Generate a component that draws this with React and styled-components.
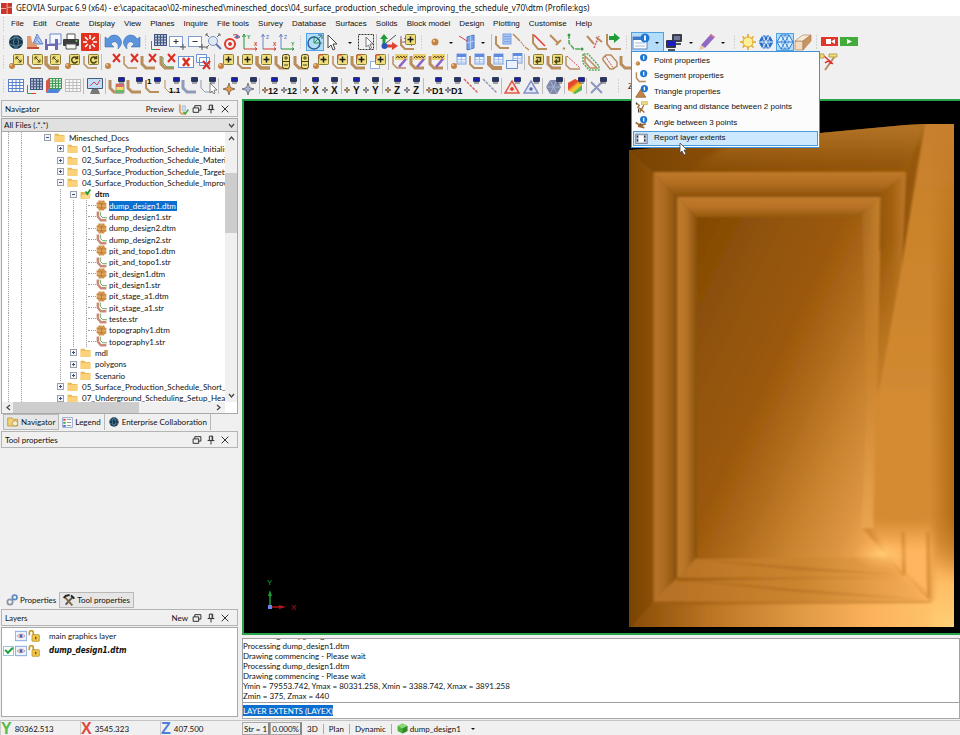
import React, { useState } from "react";
import styled, { createGlobalStyle, css } from "styled-components";

const ui = `Lato, "Noto Sans", sans-serif`;
const arial = `"Liberation Sans", Arial, sans-serif`;

const Global = createGlobalStyle`
  * { box-sizing: border-box; }
  body { margin: 0; background: #f0f0f0; }
  button, input, select { font: inherit; color: inherit; margin: 0; padding: 0; border: 0; background: none; border-radius: 0; }
  svg { display: block; }
`;

const Page = styled.div`
  min-height: 100vh;
  display: flex;
  flex-direction: column;
  background: #f0f0f0;
  color: #111;
  font: 8px/10px ${ui};
`;

const TitleBar = styled.header`
  height: 16px;
  display: flex;
  align-items: center;
  gap: 4px;
  padding-left: 1px;
  background: #fff;
  white-space: nowrap;
  h1 {
    margin: 0;
    font: 8px/12px "Noto Sans", "Open Sans", sans-serif;
  }
`;

const MenuBar = styled.nav`
  height: 16px;
  display: flex;
  align-items: center;
  font: 8px/10px ${arial};
  white-space: nowrap;
`;

const MenuButton = styled.button`
  height: 16px;
  padding: 0 5px 0 4px;
`;

const ToolRow = styled.div`
  height: ${(p) => (p.$tall ? 27 : 20)}px;
  display: flex;
  align-items: center;
`;

const Grip = styled.span`
  flex: none;
  width: ${(p) => (p.$first ? 7 : 9)}px;
  height: 14px;
  background: radial-gradient(circle, #b5b5b5 1px, transparent 1px) center / 3px 3px repeat-y;
`;

const Sep = styled.span`
  flex: none;
  width: 1px;
  height: 16px;
  margin: 0 2px 0 1px;
  background: #bdbdbd;
`;

const Group = styled.div`
  flex: none;
  width: ${(p) => p.$w}px;
  display: grid;
  grid-auto-flow: column;
  grid-auto-columns: 1fr;
  justify-items: center;
`;

const Tool = styled.button`
  width: 18px;
  height: 18px;
  ${(p) =>
    p.$active &&
    css`
      background: #b4dcfb;
      box-shadow: inset 0 0 0 1px #4da3e6;
    `}
`;

const Arrow = styled.button`
  flex: none;
  width: 14px;
  height: 18px;
  display: grid;
  place-items: center;
  &::after {
    content: "";
    border: 2px solid transparent;
    border-top-color: #111;
    margin-top: 3px;
  }
`;

const Spacer = styled.span`
  flex: none;
  width: ${(p) => p.$w}px;
`;

const Dropdown = styled.div`
  flex: none;
  position: relative;
  display: flex;
  width: 33px;
  height: 20px;
  align-items: center;
  background: #b4dcfb;
  border: 1px solid #4da3e6;
`;

const Popup = styled.div`
  position: absolute;
  z-index: 5;
  top: 18px;
  left: -1px;
  width: 189px;
  height: 97px;
  padding: 1px;
  display: grid;
  grid-auto-rows: 1fr;
  background: #fcfcfc;
  border: 1px solid #3c93dc;
  font: 8px/10px ${arial};
`;

const PopupItem = styled.button`
  position: relative;
  display: flex;
  align-items: center;
  gap: 6px;
  padding-left: 1px;
  text-align: left;
  white-space: nowrap;
  border: 1px solid transparent;
  ${(p) =>
    p.$active &&
    css`
      background: #cce8ff;
      border-color: #4c9bd8;
    `}
`;

const Pointer = styled.svg`
  position: absolute;
  left: 45px;
  top: 10px;
`;

const Main = styled.main`
  flex: 1;
  display: flex;
  gap: 4px;
`;

const Side = styled.aside`
  flex: 0 0 25%;
  min-width: 0;
  display: flex;
  flex-direction: column;
  padding: 0 2px 3px 1px;
`;

const Work = styled.section`
  flex: 1;
  min-width: 0;
  display: flex;
  flex-direction: column;
  margin-left: -2px;
`;

const PanelHead = styled.div`
  flex: none;
  height: 17px;
  margin: 1px 0;
  padding: 0 7px 0 3px;
  display: flex;
  align-items: center;
  gap: 4px;
  border: 1px solid #b4b4b4;
  h2 {
    margin: 0;
    flex: 1;
    font: inherit;
  }
`;

const HeadIcon = styled.button`
  width: 10px;
  height: 10px;
`;

const Filter = styled.select`
  flex: none;
  height: 14px;
  padding: 0 2px;
  appearance: none;
  border: 1px solid #a8a8a8;
  background: #e1e1e1;
`;

const FilterBox = styled.label`
  flex: none;
  display: grid;
  align-items: center;
  & > * {
    grid-area: 1 / 1;
  }
  svg {
    justify-self: end;
    margin-right: 3px;
    pointer-events: none;
  }
`;

const TreeBox = styled.div`
  flex: none;
  border: 1px solid #a8a8a8;
  border-top: 0;
  background: #fff;
  display: grid;
  grid-template: 270px 11px / minmax(0, 1fr) 12px;
`;

const Tree = styled.div`
  height: 272px;
  display: grid;
  grid-template-rows: repeat(24, 1fr);
`;

const TreeRow = styled.div`
  display: flex;
  align-items: stretch;
  white-space: nowrap;
  & > svg,
  & > span {
    align-self: center;
  }
`;

const Guide = styled.i`
  flex: none;
  width: 13px;
  display: grid;
  place-items: center;
  background: ${(p) =>
    p.$line ? "repeating-linear-gradient(#a9a9a9 0 1px, #eee 1px 2px) center / 1px 100% no-repeat" : "none"};
`;

const Dash = styled.i`
  flex: none;
  align-self: center;
  width: 8px;
  margin-left: -5px;
  border-top: 1px dotted #999;
`;

const Toggle = styled.button`
  width: 7px;
  height: 7px;
  border: 1px solid #9a9fa8;
  background: linear-gradient(#35508c, #35508c) center / 3px 1px no-repeat,
    linear-gradient(#35508c, #35508c) center / 1px ${(p) => (p.$open ? 0 : 3)}px no-repeat, #f6f6f6;
`;

const NodeText = styled.span`
  margin-left: ${(p) => (p.$file ? 2 : 4)}px;
  padding-right: 1px;
  font-weight: ${(p) => (p.$bold ? 700 : 400)};
  color: ${(p) => (p.$selected ? "#fff" : "#111")};
  background: ${(p) => (p.$selected ? "#0a6fd0" : "none")};
`;

const ScrollBar = styled.div`
  display: flex;
  flex-direction: ${(p) => (p.$vertical ? "column" : "row")};
  align-items: center;
  justify-content: space-between;
  padding: ${(p) => (p.$vertical ? "3px 0" : "0 3px")};
  background: #f0f0f0;
  position: relative;
`;

const Track = styled.div`
  flex: 1;
  align-self: stretch;
  display: grid;
  margin: ${(p) => (p.$vertical ? "0" : "0 1px")};
  grid-template: ${(p) => (p.$vertical ? "31fr 61fr 160fr / 1fr" : "1fr / 127fr 75fr")};
  &::before {
    content: "";
    grid-area: ${(p) => (p.$vertical ? "2 / 1" : "1 / 1")};
    background: #cdcdcd;
  }
`;

const Tabs = styled.div`
  flex: none;
  height: 16px;
  padding-left: 2px;
  display: flex;
`;

const Tab = styled.button`
  display: flex;
  align-items: center;
  gap: 2px;
  padding: 0 3px;
  white-space: nowrap;
  border-right: 1px solid #b8b8b8;
  ${(p) =>
    p.$active &&
    css`
      background: #e6e6e6;
      border: 1px solid #b8b8b8;
    `}
  ${(p) => p.$plain && "border: 0;"}
`;

const Blank = styled.div`
  flex: 1;
`;

const LayerList = styled.div`
  flex: none;
  height: 90px;
  background: #fff;
  border: 1px solid #a8a8a8;
`;

const LayerRow = styled.label`
  height: 15px;
  display: flex;
  align-items: center;
  gap: 1px;
  span {
    margin-left: 8px;
    ${(p) => p.$current && "font-weight: 700; font-style: italic; font-family: 'DejaVu Sans Condensed', sans-serif;"}
  }
`;

const Check = styled.input.attrs({ type: "checkbox" })`
  appearance: none;
  width: 11px;
  height: 10px;
  margin-left: 1px;
  border: 1px solid ${(p) => (p.checked ? "#9cc0df" : "transparent")};
  background: #fff;
  display: grid;
  place-items: center;
  &:checked::after {
    content: "";
    width: 6px;
    height: 3px;
    border: solid #1e9e3a;
    border-width: 0 0 2px 2px;
    transform: rotate(-45deg);
    margin-top: -2px;
  }
`;

const View = styled.div`
  flex: 1;
  min-height: 300px;
  display: flex;
  background: #000;
  border: 2px solid #27a34a;
  border-right: 0;
  svg {
    flex: 1;
    width: 100%;
    height: 100%;
  }
`;

const Console = styled.div`
  flex: none;
  height: 65px;
  margin-top: 3px;
  padding-bottom: 1px;
  display: flex;
  flex-direction: column;
  justify-content: flex-end;
  overflow: hidden;
  background: #fff;
  border: 1px solid #a0a0a0;
  p {
    flex: none;
    margin: 0;
    white-space: nowrap;
  }
`;

const CommandLine = styled.div`
  flex: none;
  height: 16px;
  margin-bottom: 1px;
  display: flex;
  align-items: center;
  background: #fff;
  border: 1px solid #a8a8a8;
  border-top: 0;
  input {
    field-sizing: content;
    min-width: 86px;
    height: 11px;
    background: #0a6fd0;
    color: #fff;
  }
`;

const StatusBar = styled.footer`
  height: 16px;
  display: flex;
  border-top: 1px solid #c4c4c4;
`;

const Coords = styled.div`
  flex: 0 0 25%;
  display: grid;
  grid-template-columns: repeat(3, 1fr);
  span {
    display: flex;
    align-items: center;
    gap: 3px;
    border-left: 1px solid #ccc;
  }
  b {
    font: 700 16px/14px ${arial};
    color: ${(p) => p.color};
  }
`;

const Axis = styled.b`
  && {
    color: ${(p) => p.$c};
  }
`;

const Modes = styled.div`
  display: flex;
  align-items: center;
  padding-left: 2px;
  white-space: nowrap;
`;

const Field = styled.button`
  height: 13px;
  padding: 0 1px;
  border: 1px solid #aaa;
  border-right: 2px solid #888;
`;

const Mode = styled.button`
  display: flex;
  align-items: center;
  gap: 2px;
  height: 10px;
  padding: 0 5px;
  & + & {
    border-left: 1px solid #aaa;
  }
`;

/* ---------- icon parts, all on an 18 x 18 grid ---------- */

const TAN = "#b98d5c";

const Curve = ({ c = TAN, w = 2 }) => <path d="M2 3v8l4 4h9" fill="none" stroke={c} strokeWidth={w} />;
const Ball = ({ x = 5, y = 13, r = 3 }) => (
  <g>
    <circle cx={x} cy={y} r={r} fill="#c58343" />
    <circle cx={x - 1} cy={y - 1} r={r / 3} fill="#efc79a" />
  </g>
);
const Badge = ({ kind, red }) => (
  <g fill="none" stroke="#4a431c">
    <rect x="6.5" y="1.5" width="10" height="10" rx="1" fill="#f0dd7c" stroke="#8a7d35" />
    {kind === "move" && <path d="M9 4l5 5M9 6.500V4h2.500M14 6.500V9h-2.500" />}
    {kind === "turn" && <path d="M14 5a3 3 0 1 0 .5 3M14.500 3v2.500H12" strokeWidth="1.500" />}
    {kind === "plus" && <path d="M11.500 3.500v6M8.500 6.500h6" stroke="#1b1b1b" strokeWidth="1.500" />}
    {kind === "back" && <path d="M9 4.500h4.500v4H9.500M11 6.500l-2 2 2 2" strokeWidth="1.500" />}
    {red && <path d="M7 2h4M7 2v4" stroke="#e0452c" />}
  </g>
);
const TallBadge = () => (
  <g stroke="#4a431c">
    <rect x="8.500" y="1.500" width="7" height="14" rx="2" fill="#f0dd7c" />
    <path d="M12 3v4M10 5h4M10 12h4M9 8.500h6" />
  </g>
);
const Cross = () => <path d="M9 1l7 8M16 1L9 9" stroke="#dd2f24" strokeWidth="2" fill="none" />;
const Screen = ({ x = 9, y = 0, c = "#1a1fb4" }) => (
  <g stroke="none">
    <rect x={x} y={y} width="7" height="5" rx="1" fill="#333a55" />
    <rect x={x + 1} y={y + 1} width="5" height="3" fill={c} />
    <rect x={x + 1} y={y + 5.5} width="5" height="1" fill="#555" />
  </g>
);
const Sheet = ({ x = 7, y = 1 }) => (
  <g>
    <rect x={x} y={y} width="9" height="10" fill="#eef4ff" stroke="#7d9fdb" />
    <rect x={x} y={y} width="9" height="3" fill="#5d8be0" />
    <path d={`M${x} ${y + 5.5}h9M${x} ${y + 8}h9M${x + 4.5} ${y + 3}v7`} stroke="#a9c2ee" />
  </g>
);
const Star = ({ x, y, r, c }) => (
  <path
    d={`M${x} ${y - r}l${r / 4} ${(r * 3) / 4} ${(r * 3) / 4} ${r / 4}-${(r * 3) / 4} ${r / 4}-${r / 4} ${(r * 3) / 4}-${r / 4}-${(r * 3) / 4}-${(r * 3) / 4}-${r / 4} ${(r * 3) / 4}-${r / 4}z`}
    fill={c}
    stroke="#4b3d33"
    strokeWidth=".6"
  />
);
const Label = ({ t, blue }) => (
  <g>
    <Screen x={9} c={blue ? "#27366a" : "#1a1fb4"} />
    <Star x={3} y={13} r={3} c={blue ? "#a5b5e0" : "#e3a45c"} />
    <text x={t.length > 1 ? 6 : 9} y="17" fontFamily="Liberation Sans" fontSize={t.length > 1 ? 9 : 10} fontWeight="700" fill="#111">
      {t}
    </text>
  </g>
);
const Axes = ({ a, b, ca, cb }) => (
  <g fill="none">
    <path d="M3 2v14" stroke={ca} />
    <path d="M1.500 4L3 1l1.500 3" stroke={ca} />
    <path d="M3 16h13M14 14.500l2 1.500-2 1.500" stroke={cb} />
    <text x="6" y="6" fontSize="5" fontWeight="700" fontFamily="Liberation Sans" fill={ca}>{a}</text>
    <text x="13" y="13" fontSize="5" fontWeight="700" fontFamily="Liberation Sans" fill={cb}>{b}</text>
  </g>
);
const Lattice = ({ x = 1, y = 2, w = 15, h = 12, c = "#5b82c8", fill = "#fff" }) => (
  <g stroke={c} fill={fill}>
    <rect x={x + 0.5} y={y + 0.5} width={w} height={h} />
    <path
      d={`M${x} ${y + h / 4 + 0.5}h${w}M${x} ${y + h / 2 + 0.5}h${w}M${x} ${y + h * 0.75 + 0.5}h${w}M${x + w / 4 + 0.5} ${y}v${h}M${x + w / 2 + 0.5} ${y}v${h}M${x + w * 0.75 + 0.5} ${y}v${h}`}
    />
  </g>
);
const Info = ({ x = 12, y = 5, r = 5 }) => (
  <g>
    <circle cx={x} cy={y} r={r} fill="#1f78cf" />
    <path d={`M${x} ${y - 2.5}v5`} stroke="#fff" strokeWidth="1.800" />
  </g>
);
const Hexagon = ({ fill, line }) => (
  <g fill={fill} stroke={line}>
    <path d="M5 2h8l4 7-4 7H5L1 9z" />
    <path d="M5 2l8 14M13 2L5 16M1 9h16" />
    <path d="M9 2l4 7-4 7-4-7z" fill="none" strokeWidth=".6" />
  </g>
);
const Mouse = () => <path d="M3 2v13l3-3 2 5 2-1-2-5h4z" fill="#fff" stroke="#444" />;
const Pencil = () => (
  <g>
    <path d="M4 1h13v6H4z" fill="#e8cf6b" />
    <path d="M5 5l2-2 1 2 2-2 1 2 2-2 1 2 2-2" fill="none" stroke="#6b4d1e" />
    <path d="M8 14l7-8" stroke="#8d62c4" strokeWidth="2.500" />
  </g>
);

const icons = {
  globe: (
    <g>
      <circle cx="9" cy="9" r="7" fill="#17384f" />
      <path d="M3 7q6-5 12 0M3 11q6 4 12 0M9 2q-5 7 0 14M9 2q5 7 0 14" fill="none" stroke="#6b93ad" strokeWidth=".8" />
    </g>
  ),
  open: (
    <g>
      <path d="M11 1l6 10H7z" fill="#b9cdf0" stroke="#6283c9" />
      <path d="M11 4v4M10 8l-2 3M12 8l3 3" stroke="#6283c9" />
      <path d="M1 3h4l1 6 5 3v2H1z" fill="#e09a70" />
      <path d="M1 15h12" stroke="#c24b36" strokeWidth="2" />
    </g>
  ),
  save: (
    <g>
      <path d="M6 1h11v10H6z" fill="#f6f8ff" stroke="#6a86c9" />
      <path d="M1 6h2v5h8V6h3v11H1z" fill="#6d68b8" />
      <path d="M4 13h7v4H4z" fill="#fff" />
    </g>
  ),
  print: (
    <g>
      <path d="M5 1h8v6H5z" fill="#fff" stroke="#555" />
      <rect x="1" y="6" width="16" height="7" rx="1" fill="#3c3c3c" />
      <path d="M4 11h10v5H4z" fill="#f5f5f5" stroke="#555" />
      <circle cx="14.500" cy="8" r="1" fill="#7bd35e" />
    </g>
  ),
  burst: (
    <g>
      <rect x="0" y="0" width="18" height="18" rx="1" fill="#e2311f" />
      <path d="M9 2v4M9 12v4M2 9h4M12 9h4M4 4l3 3M11 11l3 3M14 4l-3 3M7 11l-3 3" stroke="#fff" strokeWidth="1.500" />
    </g>
  ),
  undo: <path d="M1 4v10h9l-3-3q3-4 6-1 2 2 1 6 5-5 3-9-2-5-7-5-4 0-6 4z" fill="#5b93dc" stroke="#2f63ad" strokeWidth=".5" />,
  redo: <path d="M17 4v10H8l3-3q-3-4-6-1-2 2-1 6-5-5-3-9 2-5 7-5 4 0 6 4z" fill="#5b93dc" stroke="#2f63ad" strokeWidth=".5" />,
  grid: (
    <g>
      <Lattice x={4} y={1} w={12} h={11} c="#44557d" fill="#b7c2da" />
      <path d="M1.500 8v8.500H9" fill="none" stroke="#2aa04a" />
      <path d="M6 16.500h4" stroke="#d33" />
    </g>
  ),
  zin: (
    <g fill="none" stroke="#7f9dd0">
      <rect x="1.500" y="3.500" width="13" height="10" fill="#fff" />
      <path d="M8 6v5M5.500 8.500h5" stroke="#333" />
      <path d="M15 11v6M12 14h6" stroke="#555" />
    </g>
  ),
  zout: (
    <g fill="none" stroke="#7f9dd0">
      <rect x="1.500" y="3.500" width="13" height="10" fill="#fff" />
      <path d="M5.500 8.500h5" stroke="#333" />
      <path d="M15 11v6M12 14h6" stroke="#555" />
    </g>
  ),
  zoom: (
    <g fill="none" stroke="#666">
      <path d="M1 1l3 3M15 1l-3 3M1 15l3-3" />
      <path d="M1 3V1h2M13 1h2v2M1 13v2h2" />
      <circle cx="8" cy="8" r="4.500" fill="#dfe9fa" stroke="#7b8fb8" />
      <path d="M11 11l5 5" stroke="#5d7bb8" strokeWidth="2" />
    </g>
  ),
  target: (
    <g fill="none" stroke="#dd3b2c">
      <circle cx="7" cy="11" r="5" strokeWidth="2" />
      <circle cx="7" cy="11" r="1.500" fill="#dd3b2c" />
      <path d="M10 2q4-2 7 2-3 3-6 0" fill="#e9efff" stroke="#c44" />
      <circle cx="14" cy="3.500" r="1.500" fill="#3b6fc9" stroke="none" />
    </g>
  ),
  yx: <Axes a="Y" b="X" ca="#23963b" cb="#cf3a2c" />,
  zx: <Axes a="Z" b="X" ca="#6b85c9" cb="#cf3a2c" />,
  zy: <Axes a="Z" b="Y" ca="#6b85c9" cb="#23963b" />,
  orbit: (
    <g fill="none" stroke="#2f5f8c">
      <circle cx="8" cy="10" r="6" strokeWidth="1.500" />
      <path d="M8 10l7-7M8 3v7h8" stroke="#23963b" />
      <path d="M12 2h4v4" stroke="#2f5f8c" />
    </g>
  ),
  mouse: <Mouse />,
  pick: (
    <g>
      <rect x="1.500" y="1.500" width="15" height="15" fill="none" stroke="#333" strokeDasharray="2 1" />
      <path d="M9 4v10l2.500-2 1.500 4 1.500-1-1.500-4h3z" fill="#fff" stroke="#555" strokeWidth=".8" />
    </g>
  ),
  triad: (
    <g>
      <path d="M4 12V3" stroke="#1f9e38" strokeWidth="3" />
      <path d="M0 6l4-5 4 5z" fill="#1f9e38" />
      <path d="M5 13h8" stroke="#e0432f" strokeWidth="3" />
      <path d="M12 9l6 4-6 4z" fill="#e0432f" />
      <path d="M5 11L16 2" stroke="#555" />
      <circle cx="4.500" cy="13" r="3" fill="#2c57b8" />
    </g>
  ),
  solid: (
    <g>
      <path d="M2 3v8l4 5h7M5 5l8 8M3 9h9" fill="none" stroke="#8d5b8d" />
      <path d="M2 6v6l4 4h9" fill="none" stroke={TAN} strokeWidth="2" />
      <Badge kind="plus" />
    </g>
  ),
  ball: <Ball x={9} y={9} r={3.500} />,
  pane: (
    <g>
      <path d="M9 4l7-2v13l-7 2z" fill="#78a2e8" stroke="#4a78c8" />
      <path d="M9 10l7-2M12.500 3v13" stroke="#b9d0f6" />
      <path d="M1 3l8 5" stroke="#d44" />
    </g>
  ),
  segSheet: <g><Curve /><rect x="9" y="1" width="8" height="10" fill="#a9c6f3" stroke="#7d9fdb" /><path d="M10 3.500h6M10 6h6M10 8.500h6" stroke="#7ba2e6" /></g>,
  segDash: <g stroke={TAN} strokeWidth="1.500"><path d="M1 1l7 7M13 14l4 3" /><path d="M9 9l3 4" stroke="#c66" strokeDasharray="1 1" /></g>,
  segRed: <g fill="none"><path d="M2 1v9l5 6h9" stroke={TAN} strokeWidth="2" /><path d="M3 2l11 11" stroke="#e23a30" strokeWidth="1.500" /></g>,
  segBreak: <path d="M1 2l8 8M7 12l5-5M14 15l2 1" stroke={TAN} strokeWidth="2" fill="none" />,
  segGreen: <g><path d="M2 1v9l5 6h9" fill="none" stroke="#4faa58" strokeDasharray="5 1" strokeWidth="1.500" /><circle cx="2" cy="2" r="1.500" fill="#3b9a48" /><circle cx="15" cy="16" r="1.500" fill="#3b9a48" /></g>,
  segZig: <g fill="none" strokeWidth="2"><path d="M1 3l7 8M10 4l6 5" stroke={TAN} /><path d="M8 15l5-12" stroke="#c66" strokeDasharray="2 1" strokeWidth="1.500" /></g>,
  segNext: <g><path d="M3 1v10l4 5h10" fill="none" stroke={TAN} strokeWidth="2" /><path d="M5 3h5V0l6 5-6 5V7H5z" fill="#1f9e38" /></g>,
  ptMove: <g><Ball /><Badge kind="move" /></g>,
  segMove: <g><Curve /><Badge kind="move" /></g>,
  strMove: <g><Curve w={3.500} /><Badge kind="move" /></g>,
  ptTurn: <g><Ball /><Badge kind="turn" /></g>,
  segTurn: <g><Curve w={1.500} /><Badge kind="turn" /></g>,
  ptDel: <g><Ball x={4} /><Cross /></g>,
  segDel: <g><Curve w={1.500} /><Cross /></g>,
  strDel: <g><Curve w={3} /><Cross /></g>,
  triDel: <g><Curve w={3} /><path d="M4 4v6l4 4h7" stroke="#4faa58" fill="none" /><Cross /></g>,
  boxDel: <g><rect x="1.500" y="3.500" width="15" height="11" fill="#fff" stroke="#6a93d4" /><path d="M6 5l6 8M12.500 5L6 13" stroke="#dd2f24" strokeWidth="2.500" /></g>,
  boxesDel: <g><path d="M1.500 1.500h10v8h-10zM4.500 4.500h10v8h-10z" fill="#fff" stroke="#6a93d4" /><path d="M8 8l7 8M15 8l-7 8" stroke="#dd2f24" strokeWidth="2" /></g>,
  ptAdd: <g><Ball x={4} /><Badge kind="plus" /></g>,
  segAdd: <g><Curve /><Badge kind="plus" /></g>,
  strAdd: <g><Curve w={3.500} /><Badge kind="plus" /></g>,
  segTall: <g><Curve w={3} /><TallBadge /></g>,
  ptAddR: <g><Ball x={4} /><Badge kind="plus" red /></g>,
  segAddR: <g><Curve w={1.500} /><Badge kind="plus" red /></g>,
  strAddR: <g><Curve w={3} /><Badge kind="plus" red /></g>,
  boxAddR: <g><rect x="1.500" y="8.500" width="9" height="7" fill="#fff" stroke="#8fb1e6" /><Badge kind="plus" red /></g>,
  segRen: <g><Curve w={1.500} /><Pencil /></g>,
  strRen: <g><Curve w={3} /><Pencil /></g>,
  ptTab: <g><Ball x={4} /><Sheet /></g>,
  segTab: <g><Curve /><Sheet /></g>,
  strTab: <g><Curve w={4} /><Sheet /></g>,
  boxTab: <g><Sheet x={8} y={0} /><rect x="1.500" y="7.500" width="11" height="8" fill="#eaf2ff" stroke="#6a93d4" /></g>,
  segBack: <g><Curve w={1.500} /><Badge kind="back" /></g>,
  strBack: <g><Curve w={3} /><Badge kind="back" /></g>,
  cutRed: <g fill="none"><path d="M2 3v9l4 4h10" stroke={TAN} strokeWidth="1.500" /><path d="M3 3l13 12" stroke="#d44" strokeDasharray="2 1" /></g>,
  cutGreen: <g fill="none"><path d="M1 1v9l6 7h10v-4L6 1z" stroke="#58a858" strokeDasharray="2 1" strokeWidth="1.500" /><path d="M3 3v6l5 6h7z" stroke={TAN} strokeWidth="1.500" /></g>,
  cutPar: <g fill="none"><path d="M2 5l3-3h5l6 7v4l-4 3H9L2 7z" stroke={TAN} strokeWidth="1.500" /><path d="M4 3l9 13" stroke="#d44" strokeDasharray="2 1" /></g>,
  seg: <Curve w={3} />,
  snip: <g fill="none"><path d="M15 3L5 17" stroke={TAN} strokeWidth="2" /><path d="M4 3l9 8M5 10q4-4 6 1" stroke="#d33" strokeWidth="1.500" /><path d="M0 1h4v4H0zM9 1h8v3H9z" fill="#f0dd7c" stroke="#b9a54a" /></g>,
  lattice: <Lattice />,
  cube: <g><Lattice x={4} y={1} w={12} h={10} c="#3f9a56" fill="#dfeede" /><path d="M1 4l3-3v11l-3 4z" fill="#d9534a" /><path d="M1 16l3-4h12l-3 4z" fill="#4d86d6" /></g>,
  faint: <Lattice c="#bdbdbd" fill="#fafafa" />,
  display: <g><rect x="1" y="1" width="16" height="11" rx="1" fill="#4a5a70" /><rect x="2" y="2" width="14" height="9" fill="#bfe0fa" /><path d="M4 9l4-4 3 3 3-5" stroke="#d44" fill="none" /><path d="M6 12h6l2 5H4z" fill="#777" /></g>,
  drawAll: <g><Curve w={3} /><path d="M8 7h8v9H8z" fill="#f4dc62" stroke="#999" /><path d="M8 7h8v3H8z" fill="#d66" /><path d="M8 13h8v3H8z" fill="#68b86b" /><Screen x={10} /></g>,
  drawSeg: <g><Curve w={3} /><Screen x={10} /></g>,
  drawOne: <g><Curve w={2} /><Screen x={10} /><text x="3" y="7" fontSize="8" fontWeight="700" fontFamily="Liberation Sans">1</text></g>,
  drawVal: <g><Curve w={1} /><Screen x={10} /><text x="6" y="16" fontSize="8" fontWeight="700" fontFamily="Liberation Sans">1.1</text></g>,
  hideSeg: <g><Curve w={3} c="#8f9bb8" /><Screen x={10} c="#27366a" /></g>,
  hidePick: <g><Curve w={1} c="#8f9bb8" /><Screen x={10} c="#27366a" /><path d="M11 6v10l2-2 2 3 1-1-1-3h3z" fill="#fff" stroke="#555" strokeWidth=".7" /></g>,
  mark: <g><Star x={8} y={12} r={6} c="#e39a4c" /><Screen x={10} /></g>,
  unmark: <g><Star x={8} y={12} r={6} c="#a5b5e0" /><Screen x={10} c="#27366a" /></g>,
  n12: <Label t="12" />, n12b: <Label t="12" blue />,
  x: <Label t="X" />, xb: <Label t="X" blue />,
  y: <Label t="Y" />, yb: <Label t="Y" blue />,
  z: <Label t="Z" />, zb: <Label t="Z" blue />,
  d1: <Label t="D1" />, d1b: <Label t="D1" blue />,
  dashRed: <g><path d="M1 2l14 14" stroke="#d66" strokeDasharray="3 1" strokeWidth="1.500" /><Screen x={10} /></g>,
  dashBlue: <g><path d="M1 2l14 14" stroke="#8f9bb8" strokeDasharray="3 1" strokeWidth="1.500" /><Screen x={10} c="#27366a" /></g>,
  triRed: <g fill="#fbe3df" stroke="#e0594a"><path d="M8 4l7 12H1z" strokeWidth="1.500" /><circle cx="8" cy="12" r="1.500" fill="#e0392c" /><Screen x={10} /></g>,
  triBlue: <g fill="#e6eaf6" stroke="#8391c4"><path d="M8 4l7 12H1z" strokeWidth="1.500" /><circle cx="8" cy="12" r="1.500" fill="#4a5fae" /><Screen x={10} c="#27366a" /></g>,
  hexGrey: <g><path d="M5 3h7l4 7-4 7H5l-4-7z" fill="#8089ac" /><path d="M1 10h15M5 3l7 14M12 3L5 17" fill="none" stroke="#b3bad6" strokeWidth=".8" /><Screen x={11} c="#27366a" /></g>,
  hexHot: (
    <g>
      <path d="M8 2l7 4v7l-7 4-7-4V6z" fill="#f2c32e" />
      <path d="M8 2l4 2-11 9V6z" fill="#e5482f" />
      <path d="M12 4l1 1-11 9-1-1z" fill="#ef8b2e" />
      <path d="M15 8v5l-7 4-2-1z" fill="#58b957" />
      <Screen x={11} />
    </g>
  ),
  xGrey: <g><path d="M2 5l11 11M13 5L2 16" stroke="#8d97bd" strokeWidth="2" /><Screen x={11} c="#27366a" /></g>,
  screens: <g><rect x="7" y="1" width="10" height="8" rx="1" fill="#3a3d4c" /><rect x="9" y="3" width="6" height="4" fill="#6d7697" /><rect x="1" y="7" width="10" height="8" rx="1" fill="#33364a" /><rect x="2" y="8" width="8" height="5" fill="#1c1fc0" /><path d="M3 17h7M11 11h5" stroke="#555" strokeWidth="2" /></g>,
  pencil: <g><path d="M3 12L13 1l4 3L7 15z" fill="#9169c4" /><path d="M12 2l1-1 4 3-1 1z" fill="#e07a88" /><path d="M3 12l4 3-6 2z" fill="#e7c79b" /></g>,
  sun: <g stroke="#e0a51c" strokeWidth="1.500"><path d="M9 1v16M1 9h16M3.500 3.500l11 11M14.500 3.500l-11 11" /><circle cx="9" cy="9" r="5" fill="#ffee9a" strokeWidth="1" /></g>,
  hexBlue: <Hexagon fill="#2a70c8" line="#e8f2fd" />,
  hexLine: <Hexagon fill="#dcefff" line="#2a7bd0" />,
  block: <g stroke="#a4764d" strokeWidth=".6"><path d="M1 8h8v9H1z" fill="#f3dcc0" /><path d="M1 8l8-6h8L9 8z" fill="#f8ead8" /><path d="M17 2v6l-8 9V8z" fill="#c9945f" /></g>,
  rec: <g><rect x="0" y="4" width="17" height="9" fill="#e3352b" /><path d="M5 6h5v5H5zM10 8.500l4-2.500v5z" fill="#fff" /></g>,
  play: <g><rect x="0" y="4" width="18" height="9" fill="#43ab3a" /><path d="M7 6l5 2.500-5 2.500z" fill="#fff" /></g>,
  props: <g><rect x="1" y="4" width="14" height="12" fill="#fff" stroke="#5d83b8" /><rect x="1" y="4" width="14" height="3" fill="#3f78c8" /><path d="M3 10h10M3 13h10" stroke="#9fb9dc" /><Info x={13} y={5} r={4.500} /></g>,
  pPoint: <g><Ball x={4} y={13} r={3} /><Info /></g>,
  pSeg: <g><path d="M2 3v8l4 5h9" fill="none" stroke={TAN} strokeWidth="2" /><Info /></g>,
  pTri: <g><path d="M8 6l7 11H1z" fill="#c58343" stroke="#8c5a2a" /><Info x={13} /></g>,
  pBearing: <g fill="none" stroke="#9b6b3a"><path d="M2 3l4 3-2 3 4 2-1 5M12 6l-3 6 4 4" strokeWidth="1.800" /><path d="M9 1h8v4H9z" fill="#f0dd7c" stroke="#c0aa50" /><path d="M2 2v3M5 11v5" stroke="#333" strokeWidth="1.500" /></g>,
  pAngle: <g fill="none"><path d="M1 9l6 4 8-2M4 14l9 2M7 10l3 5" stroke="#a06a35" strokeWidth="2.500" /><path d="M6 12l5 1" stroke="#444" /><Info x={12} /></g>,
  pLayer: <g fill="none" stroke="#5a6478"><path d="M1 3h16v13H1z" fill="#c7d0e0" /><path d="M5 5h7v9H5z" fill="#fff" stroke="none" /><path d="M3.500 5v3M3.500 10v3M13.500 5v3M13.500 10v3" stroke="#2b3348" strokeWidth="2" /></g>,
  folder: <g><path d="M1 3h6l2 2h8v11H1z" fill="#e8b64c" /><path d="M1 6h16v10H1z" fill="#fbd27a" /></g>,
  folderOk: <g><path d="M1 5h6l2 2h7v9H1z" fill="#e8b64c" /><path d="M4 9h14l-3 7H1z" fill="#fbd98a" /><path d="M9 4l3 4 5-7" fill="none" stroke="#1f9e38" strokeWidth="3" /></g>,
  dtm: <g><path d="M5 1h8l4 5v7l-5 4H5l-4-5V5z" fill="#dfa25c" /><path d="M5 1l4 6 4-6M1 5l8 2 8-1M9 7v6M1 12l8 1 8 0M5 17l4-4 3 4" fill="none" stroke="#a8692c" /></g>,
  str: <g fill="none"><path d="M3 1v8l5 6h9" stroke="#c98a78" strokeWidth="4" /><path d="M7 1v6l4 4h7" stroke="#5e9e55" strokeWidth="1.500" /></g>,
  restore: <path d="M5 7V3h11v8h-4M2 7h10v8H2z" fill="none" stroke="#333" strokeWidth="1.800" />,
  pin: <path d="M6 2h6v8M6 2v8M3 10h12M9 10v7M11 2v8" fill="none" stroke="#333" strokeWidth="1.800" />,
  close: <path d="M3 3l12 12M15 3L3 15" stroke="#333" strokeWidth="1.800" />,
  preview: <g fill="none"><path d="M3 1v12l3 3h7" stroke="#dba45c" strokeWidth="3" /><path d="M7 3h5v8H7z" fill="#cfdff6" stroke="#8aa7d3" /><path d="M9 13l3 3 5-7" stroke="#48a848" strokeWidth="2.500" /></g>,
  book: <g><path d="M1 3h7l2 2h6v10H1z" fill="#f2cf74" stroke="#b48a2c" /><circle cx="12" cy="11" r="4" fill="#f8efcf" stroke="#a2843a" /></g>,
  legend: <g><path d="M1 1h16v16H1z" fill="#fff" stroke="#5d7fb8" /><path d="M2 3h4v3H2z" fill="#d44" /><path d="M2 8h4v3H2z" fill="#3a3" /><path d="M2 13h4v3H2z" fill="#36c" /><path d="M8 4h7M8 9h7M8 14h7" stroke="#555" /></g>,
  gears: <g fill="none" strokeWidth="2.500"><circle cx="6" cy="12" r="4" stroke="#8a93a5" /><circle cx="13" cy="5" r="3.500" stroke="#5c86c4" /></g>,
  hammer: <g fill="none" strokeWidth="3"><path d="M4 16L15 4" stroke="#555" /><path d="M3 5l11 12" stroke="#8b6a3c" /><path d="M1 6q3-5 9-4" stroke="#222" /><path d="M12 2l5 5" stroke="#222" /></g>,
  eye: <g><rect x=".5" y="2" width="17" height="14" fill="#eef4fd" stroke="#86a9dd" strokeWidth="1.500" /><path d="M3 9q6-6 12 0-6 5-12 0z" fill="#fff" stroke="#c66" /><circle cx="9" cy="9" r="2.500" fill="#3b6bc0" /></g>,
  lock: <g><path d="M2 8V4q0-3 3-3t3 3v4" fill="none" stroke="#c9971f" strokeWidth="2.500" /><rect x="6" y="7" width="11" height="10" rx="1" fill="#f0c64a" stroke="#ab821c" /><path d="M11.500 10v4" stroke="#6a4c0b" strokeWidth="2" /></g>,
  cubeGreen: <g><path d="M9 1l8 4v8l-8 4-8-4V5z" fill="#4caf3c" /><path d="M9 1l8 4-8 4-8-4z" fill="#8ad873" /><path d="M9 9l8-4v8l-8 4z" fill="#348a2a" /></g>,
  app: <g><rect width="18" height="18" fill="#c9352b" /><path d="M0 9h8M10 0v18M10 7h8" stroke="#f0b3a8" strokeWidth="1.500" /></g>,
};

const Icon = ({ name, size = 18 }) => (
  <svg width={size} height={size} viewBox="0 0 18 18" aria-hidden="true">
    {icons[name]}
  </svg>
);

const Tools = ({ w, names, active }) => (
  <Group $w={w}>
    {names.split(" ").map((name, i) => (
      <Tool key={name + i} $active={name === active} aria-label={name}>
        <Icon name={name} />
      </Tool>
    ))}
  </Group>
);

const menus = [
  "File", "Edit", "Create", "Display", "View", "Planes", "Inquire", "File tools", "Survey",
  "Database", "Surfaces", "Solids", "Block model", "Design", "Plotting", "Customise", "Help",
];

const inquireItems = [
  ["pPoint", "Point properties"],
  ["pSeg", "Segment properties"],
  ["pTri", "Triangle properties"],
  ["pBearing", "Bearing and distance between 2 points"],
  ["pAngle", "Angle between 3 points"],
  ["pLayer", "Report layer extents"],
];

// guides: one character per indent column, "|" draws the dotted line
const tree = [
  { guides: "|| ", open: true, text: "Minesched_Docs" },
  { guides: "||  ", text: "01_Surface_Production_Schedule_Initialis" },
  { guides: "||  ", text: "02_Surface_Production_Schedule_Materia" },
  { guides: "||  ", text: "03_Surface_Production_Schedule_Targeti" },
  { guides: "||  ", open: true, text: "04_Surface_Production_Schedule_Improv" },
  { guides: "||  |", open: true, icon: "folderOk", text: "dtm", bold: true },
  ...[
    "dump_design1.dtm", "dump_design1.str", "dump_design2.dtm", "dump_design2.str",
    "pit_and_topo1.dtm", "pit_and_topo1.str", "pit_design1.dtm", "pit_design1.str",
    "pit_stage_a1.dtm", "pit_stage_a1.str", "teste.str", "topography1.dtm", "topography1.str",
  ].map((text) => ({ guides: "||  |||", file: true, icon: text.slice(-3), text })),
  { guides: "||  |", text: "mdl" },
  { guides: "||  |", text: "polygons" },
  { guides: "||  |", text: "Scenario" },
  { guides: "||  ", text: "05_Surface_Production_Schedule_Short_T" },
  { guides: "||  ", text: "07_Underground_Scheduling_Setup_Head" },
];

const log = [
  "Processing dump_design1.dtm",
  "Processing dump_design1.dtm",
  "Drawing commencing - Please wait",
  "Processing dump_design1.dtm",
  "Drawing commencing - Please wait",
  "Ymin = 79553.742, Ymax = 80331.258, Xmin = 3388.742, Xmax = 3891.258",
  "Zmin = 375, Zmax = 440",
];

const Chevron = ({ d }) => (
  <svg width="7" height="7" viewBox="0 0 7 7" aria-hidden="true">
    <path d={d} fill="none" stroke="#444" strokeWidth="1.200" />
  </svg>
);

const WindowButtons = () => (
  <>
    <HeadIcon aria-label="Float"><Icon name="restore" size={10} /></HeadIcon>
    <HeadIcon aria-label="Pin"><Icon name="pin" size={10} /></HeadIcon>
    <HeadIcon aria-label="Close"><Icon name="close" size={10} /></HeadIcon>
  </>
);

const grads = [
  ["rim", 629, 0, 905, 0, "#784302", "#93550c", "#a0600f"],
  ["rimFade", 0, 130, 0, 168, "#b87a2e", "#8c5006"],
  ["west", 629, 0, 653, 0, "#784302", "#8c5007"],
  ["slab", 0, 124, 0, 527, "#c8802e", "#cb842c", "#cf872e", "#d28a32", "#d68c34"],
  ["south", 629, 0, 954, 0, "#874b04", "#bb7524", "#dc9641", "#fcb25c", "#ffcb70"],
  ["top1", 0, 172, 0, 197, "#c07b2b", "#b06d20", "#8a5008"],
  ["top2", 0, 197, 0, 217, "#c07b2b", "#b87226", "#965a0e"],
  ["left1", 653, 0, 677, 0, "#ba752a", "#ab6a20", "#87500a"],
  ["left2", 677, 0, 697, 0, "#c27e2d", "#b37126", "#87500a"],
  ["right1", 880, 0, 905, 0, "#965608", "#a4620f", "#bd772a"],
  ["right1Low", 0, 240, 0, 400, "#cb842c00", "#cb842cff"],
  ["right2", 862, 0, 880, 0, "#a8681c", "#c5802e"],
  ["right2Low", 0, 217, 0, 527, "#c5802e00", "#cb842c", "#e9a451"],
  ["floor", 697, 217, 981, 351, "#824904", "#8c5007", "#95550a", "#9c590b", "#b16c1d", "#c8832f", "#dc9442", "#ffb55e"],
  ["bot", 677, 0, 930, 0, "#b87226", "#cb8630", "#fab05a"],
  ["shade", 677, 0, 900, 0, "#9c5c10", "#b87226", "#d08a36"],
  ["corner", 0, 520, 0, 550, "#ffb55e00", "#ffb55e"],
  ["eastLow", 0, 520, 0, 627, "#d6903600", "#ffb860", "#ffd67a"],
];

const Scene = () => (
  <svg viewBox="244 101 716 532" preserveAspectRatio="xMaxYMax meet" role="img" aria-label="dump_design1.dtm">
    <defs>
      {grads.map(([id, x1, y1, x2, y2, ...stops]) => (
        <linearGradient key={id} id={id} gradientUnits="userSpaceOnUse" x1={x1} y1={y1} x2={x2} y2={y2}>
          {stops.map((c, i) => (
            <stop key={i} offset={i / (stops.length - 1)} stopColor={c} />
          ))}
        </linearGradient>
      ))}
      <linearGradient id="east" gradientUnits="userSpaceOnUse" x1="930" y1="0" x2="954" y2="0">
        <stop offset="0" stopColor="#b46c14" stopOpacity="0" />
        <stop offset="1" stopColor="#b46c14" />
      </linearGradient>
      <linearGradient id="eastMask" x1="0" y1="0" x2="0" y2="1">
        <stop offset="0" stopColor="#000" />
        <stop offset=".4" stopColor="#fff" />
        <stop offset=".85" stopColor="#fff" />
        <stop offset="1" stopColor="#000" />
      </linearGradient>
      <mask id="eastFade">
        <rect x="925" y="124" width="30" height="460" fill="url(#eastMask)" />
      </mask>
      <radialGradient id="glow">
        <stop offset="0" stopColor="#ffd078" />
        <stop offset="1" stopColor="#ffb45c" stopOpacity="0" />
      </radialGradient>
      <clipPath id="outline">
        <path d="M629 150L820 133L905 125L923 124H954V627H629z" />
      </clipPath>
      <filter id="soft" x="-5%" y="-5%" width="110%" height="110%">
        <feGaussianBlur stdDeviation="1.3" />
      </filter>
      <filter id="softer" x="-20%" y="-20%" width="140%" height="140%">
        <feGaussianBlur stdDeviation="3" />
      </filter>
    </defs>
    <g clipPath="url(#outline)">
      <path d="M629 120H954V627H629z" fill="url(#rim)" />
      <path d="M760 120H930L905 171H690z" fill="url(#rimFade)" opacity=".7" filter="url(#softer)" />
      <path d="M629 150L653 172V602L629 640z" fill="url(#west)" />
      <g filter="url(#soft)">
        <path d="M906 172L920 142L902 262z" fill="#965608" />
        <path d="M926 118H960V640H862V380L902 265z" fill="url(#slab)" />
        <path d="M620 640H965V590L931 602H653z" fill="url(#south)" />
        <path d="M653 172H906L881 197H677z" fill="url(#top1)" />
        <path d="M653 172L677 197V580L653 602z" fill="url(#left1)" />
        <path d="M906 172L902 265L877 400L880 194z" fill="url(#right1)" />
        <path d="M906 172L902 265L877 400L880 194z" fill="url(#right1Low)" />
        <path d="M677 197H881L862 217H697z" fill="url(#top2)" />
        <path d="M677 197L697 217V558L677 580z" fill="url(#left2)" />
        <path d="M653 602L679 576H906L931 602z" fill="url(#bot)" />
        <path d="M677 580L697 557L884 555L906 580z" fill="url(#bot)" />
        <path d="M881 197L877 400L874 528H860V217z" fill="url(#right2)" />
        <path d="M881 197L877 400L874 528H860V217z" fill="url(#right2Low)" />
        <path d="M697 217H862L867 400L862 528L888 557L697 559z" fill="url(#floor)" />
      </g>
      <path d="M877 390H930V527H875z" fill="#d48b33" filter="url(#softer)" />
      <path d="M932 520H964V640H932z" fill="url(#eastLow)" filter="url(#softer)" />
      <rect x="925" y="124" width="30" height="460" fill="url(#east)" mask="url(#eastFade)" />
      <path d="M868 520H932V600L906 577L884 556z" fill="url(#corner)" filter="url(#softer)" />
      <g filter="url(#soft)" fill="none" stroke="#cb842e">
        <path d="M903 532L904 574" strokeWidth="4" opacity=".6" />
        <path d="M928 532L929 598" strokeWidth="4" opacity=".6" />
        <path d="M700 560L904 575L800 570z" fill="url(#shade)" stroke="none" />
        <path d="M682 580L928 600L800 592z" fill="url(#shade)" stroke="none" />
        <path d="M677 578L905 577L677 581z" fill="url(#shade)" stroke="none" />
        <path d="M653 602L931 601L931 603L653 605z" fill="url(#shade)" stroke="none" opacity=".8" />
        <path d="M653 173V602M677 198V579" stroke="#7d4705" opacity=".5" />
        <path d="M881 198L880 250" stroke="#8c5007" strokeWidth="2" opacity=".5" />
      </g>
      <ellipse cx="882" cy="554" rx="30" ry="16" fill="url(#glow)" opacity=".8" />
      <ellipse cx="954" cy="627" rx="50" ry="40" fill="url(#glow)" />
    </g>
    <g fontFamily="Liberation Sans" fontSize="8">
      <path d="M270 606V593" stroke="#1d9e2f" strokeWidth="1.500" />
      <path d="M268 596L270 590L272 596z" fill="#1d9e2f" />
      <path d="M272 607H281" stroke="#b3161b" strokeWidth="1.500" />
      <path d="M279 605L286 607L279 609z" fill="#b3161b" />
      <rect x="268" y="605" width="4" height="4" fill="#6b83ea" />
      <text x="267" y="585" fill="#16a52b">Y</text>
      <text x="291" y="610" fill="#c0161b">X</text>
    </g>
  </svg>
);

const App = () => {
  const [selected, setSelected] = useState("dump_design1.dtm");
  const [shown, setShown] = useState(true);
  return (
    <Page>
      <Global />
      <TitleBar>
        <Icon name="app" size={11} />
        <h1>
          GEOVIA Surpac 6.9 (x64) - e:\capacitacao\02-minesched\minesched_docs\04_surface_production_schedule_improving_the_schedule_v70\dtm (Profile:kgs)
        </h1>
      </TitleBar>
      <MenuBar>
        <Grip $first />
        {menus.map((m) => (
          <MenuButton key={m}>{m}</MenuButton>
        ))}
      </MenuBar>
      <ToolRow>
        <Grip $first />
        <Tools w={92} names="globe open save print burst" />
        <Sep />
        <Tools w={38} names="undo redo" />
        <Grip />
        <Tools w={146} names="grid zin zout zoom target yx zx zy" />
        <Grip />
        <Tools w={38} names="orbit mouse" active="orbit" />
        <Arrow aria-label="Select modes" />
        <Tools w={18} names="pick" />
        <Sep />
        <Tools w={38} names="triad solid" />
        <Grip />
        <Tools w={18} names="ball" />
        <Arrow aria-label="Point tools" />
        <Tools w={18} names="pane" />
        <Arrow aria-label="Plane tools" />
        <Sep />
        <Tools w={128} names="segSheet segDash segRed segBreak segGreen segZig segNext" />
        <Grip />
        <Dropdown>
          <Tool aria-label="Properties"><Icon name="props" /></Tool>
          <Arrow aria-label="Inquire" />
          <Popup role="menu">
            {inquireItems.map(([icon, text]) => (
              <PopupItem key={icon} role="menuitem" $active={icon === "pLayer"}>
                <Icon name={icon} size={13} />
                {text}
                {icon === "pLayer" && (
                  <Pointer width="10" height="14" viewBox="0 0 10 14">
                    <path d="M1 1v10l2-2 2 4 2-1-2-4h3z" fill="#fff" stroke="#444" strokeWidth=".8" />
                  </Pointer>
                )}
              </PopupItem>
            ))}
          </Popup>
        </Dropdown>
        <Tools w={20} names="screens" />
        <Arrow aria-label="Graphics windows" />
        <Tools w={18} names="pencil" />
        <Arrow aria-label="Edit tools" />
        <Grip />
        <Tools w={73} names="sun hexBlue hexLine block" active="hexLine" />
        <Grip />
        <Tools w={37} names="rec play" />
      </ToolRow>
      <ToolRow>
        <Grip $first />
        <Tools w={93} names="ptMove segMove strMove ptTurn segTurn" />
        <Sep />
        <Tools w={109} names="ptDel segDel strDel triDel boxDel boxesDel" />
        <Sep />
        <Tools w={170} names="ptAdd segAdd strAdd segTall segTall ptAddR segAddR strAddR boxAddR" />
        <Sep />
        <Tools w={55} names="segRen strRen strRen" />
        <Sep />
        <Tools w={73} names="ptTab segTab strTab boxTab" />
        <Sep />
        <Tools w={37} names="segBack strBack" />
        <Tools w={73} names="cutRed cutGreen cutPar seg" />
        <Spacer $w={183} />
        <Tools w={18} names="snip" />
      </ToolRow>
      <ToolRow $tall>
        <Grip $first />
        <Tools w={75} names="lattice grid cube faint" />
        <Sep />
        <Tools w={18} names="display" />
        <Sep />
        <Tools w={109} names="drawAll drawSeg drawOne drawVal hideSeg hidePick" />
        <Sep />
        <Tools w={37} names="mark unmark" />
        <Sep />
        <Tools w={37} names="n12 n12b" />
        <Sep />
        <Tools w={37} names="x xb" />
        <Sep />
        <Tools w={37} names="y yb" />
        <Sep />
        <Tools w={37} names="z zb" />
        <Sep />
        <Tools w={37} names="d1 d1b" />
        <Tools w={37} names="dashRed dashBlue" />
        <Sep />
        <Tools w={37} names="triRed triBlue" />
        <Sep />
        <Tools w={18} names="hexGrey" />
        <Sep />
        <Tools w={18} names="hexHot" />
        <Sep />
        <Tools w={18} names="xGrey" />
        <Spacer $w={7} />
        <Grip />
        <Spacer $w={5} />
        <span>Z</span>
      </ToolRow>
      <Main>
        <Side>
          <PanelHead>
            <h2>Navigator</h2>
            <span>Preview</span>
            <HeadIcon aria-label="Preview"><Icon name="preview" size={11} /></HeadIcon>
            <WindowButtons />
          </PanelHead>
          <FilterBox>
            <Filter aria-label="File filter">
              <option>All Files (.*.*)</option>
            </Filter>
            <Chevron d="M1 2l2.500 3L6 2" />
          </FilterBox>
          <TreeBox>
            <Tree role="tree">
              {tree.map((n) => (
                <TreeRow key={n.text} role="treeitem" onClick={() => n.file && setSelected(n.text)}>
                  {n.guides.split("").map((g, i) => (
                    <Guide key={i} $line={g === "|"} />
                  ))}
                  {!n.file && (
                    <Guide>
                      <Toggle $open={n.open} aria-label={n.open ? "Collapse" : "Expand"} />
                    </Guide>
                  )}
                  {n.file && <Dash />}
                  <Icon name={n.icon || "folder"} size={11} />
                  <NodeText $file={n.file} $bold={n.bold} $selected={n.text === selected}>
                    {n.text}
                  </NodeText>
                </TreeRow>
              ))}
            </Tree>
            <ScrollBar $vertical>
              <Chevron d="M1 5l2.500-3L6 5" />
              <Track $vertical />
              <Chevron d="M1 2l2.500 3L6 2" />
            </ScrollBar>
            <ScrollBar>
              <Chevron d="M5 1L2 3.500 5 6" />
              <Track />
              <Chevron d="M2 1l3 2.500L2 6" />
            </ScrollBar>
          </TreeBox>
          <Tabs>
            <Tab $active><Icon name="book" size={12} />Navigator</Tab>
            <Tab><Icon name="legend" size={11} />Legend</Tab>
            <Tab><Icon name="globe" size={12} />Enterprise Collaboration</Tab>
          </Tabs>
          <PanelHead>
            <h2>Tool properties</h2>
            <WindowButtons />
          </PanelHead>
          <Blank />
          <Tabs>
            <Tab $plain><Icon name="gears" size={12} />Properties</Tab>
            <Tab $active><Icon name="hammer" size={12} />Tool properties</Tab>
          </Tabs>
          <PanelHead>
            <h2>Layers</h2>
            <button>New</button>
            <WindowButtons />
          </PanelHead>
          <LayerList>
            <LayerRow>
              <Check checked={false} readOnly />
              <Icon name="eye" size={12} />
              <Icon name="lock" size={12} />
              <span>main graphics layer</span>
            </LayerRow>
            <LayerRow $current>
              <Check checked={shown} onChange={(e) => setShown(e.target.checked)} />
              <Icon name="eye" size={12} />
              <Icon name="lock" size={12} />
              <span>dump_design1.dtm</span>
            </LayerRow>
          </LayerList>
        </Side>
        <Work>
          <View>
            <Scene />
          </View>
          <Console>
            {log.map((line, i) => (
              <p key={i}>{line}</p>
            ))}
          </Console>
          <CommandLine>
            <input aria-label="Command" defaultValue="LAYER EXTENTS (LAYEX)" />
          </CommandLine>
        </Work>
      </Main>
      <StatusBar>
        <Coords>
          <span><Axis $c="#58b947">Y</Axis>80362.513</span>
          <span><Axis $c="#dd4a40">X</Axis>3545.323</span>
          <span><Axis $c="#4f7fdc">Z</Axis>407.500</span>
        </Coords>
        <Modes>
          <Field>Str = 1</Field>
          <Field>0.000%</Field>
          <Mode>3D</Mode>
          <Mode>Plan</Mode>
          <Mode>Dynamic</Mode>
          <Mode><Icon name="cubeGreen" size={11} />dump_design1</Mode>
          <Arrow aria-label="Active layer" />
        </Modes>
      </StatusBar>
    </Page>
  );
};

export default App;
